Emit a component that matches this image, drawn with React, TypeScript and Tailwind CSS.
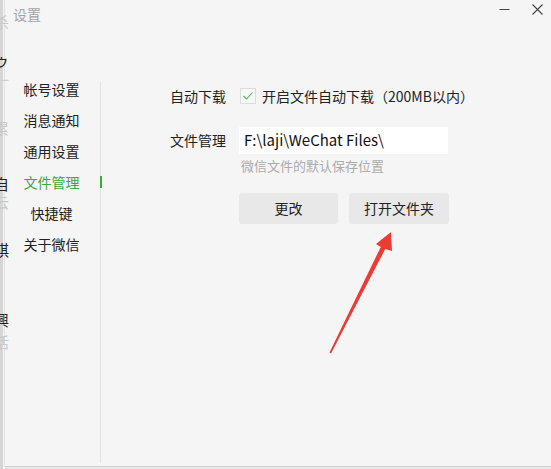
import React from 'react';

const font = { fontFamily: '"Microsoft YaHei", "Noto Sans CJK SC", "Noto Sans", sans-serif' };

const menu = ['帐号设置', '消息通知', '通用设置', '文件管理', '快捷键', '关于微信'];

// fragments of the main window peeking out on the left
const peeks = [
  { ch: '杀', top: 14, cls: 'text-[#c8c8c8]' },
  { ch: 'ゥ', top: 52, cls: 'text-[#222]' },
  { ch: '一', top: 72, cls: 'text-[#d0d0d0]' },
  { ch: '累', top: 120, cls: 'text-[#c8c8c8]' },
  { ch: '自', top: 176, cls: 'text-[#222]' },
  { ch: '云', top: 194, cls: 'text-[#c8c8c8]' },
  { ch: '祺', top: 242, cls: 'text-[#222]' },
  { ch: ')', top: 262, cls: 'text-[#c8c8c8]' },
  { ch: '興', top: 312, cls: 'text-[#222]' },
  { ch: '活', top: 334, cls: 'text-[#c8c8c8]' },
];

function Arrow() {
  return (
    <svg className="absolute left-0 top-0 pointer-events-none" width="551" height="469" viewBox="0 0 551 469">
      <polygon
        points="391,232 392,251 385.2,249.1 331,353.5 329.5,352.5 380.8,246.9 376,244"
        fill="#ea3b35"
      />
    </svg>
  );
}

export default function App() {
  return (
    <div className="relative w-[551px] h-[469px] overflow-hidden bg-[#f5f5f5] text-[#222]" style={font}>
      <div className="flex h-full">
        {/* background window edge */}
        <div className="w-[3px] h-full bg-[#d6d6d6]" />
        <div className="w-px h-[466px] bg-[#e2e2e2] ml-px" />

        <div className="flex-1 flex flex-col">
          {/* title bar */}
          <div className="h-[28px] flex items-start justify-between pl-[8px] pr-[8px]">
            <span className="text-[14px] leading-[28px] text-[#a3a3a3]">设置</span>
            <div className="flex items-center gap-[22px] pt-[4px]">
              <svg width="11" height="11" viewBox="0 0 11 11">
                <line x1="0.5" y1="5.5" x2="10.5" y2="5.5" stroke="#444" strokeWidth="1" />
              </svg>
              <svg width="11" height="11" viewBox="0 0 11 11">
                <path d="M0.5 0.5 L10.5 10.5 M10.5 0.5 L0.5 10.5" stroke="#444" strokeWidth="1.1" />
              </svg>
            </div>
          </div>

          <div className="flex flex-1">
            {/* sidebar */}
            <div className="flex">
              <div className="w-[95px] pt-[46px] pr-[2px] flex flex-col">
                {menu.map((m) => (
                  <div
                    key={m}
                    className={`relative h-[31px] leading-[31px] text-[14px] text-center ${m === '文件管理' ? 'text-[#3aa83a]' : 'text-[#222]'}`}
                  >
                    {m}
                    {m === '文件管理' && <span className="absolute right-[-4px] top-[9px] w-[2px] h-[12px] bg-[#2db52d]" />}
                  </div>
                ))}
              </div>
              <div className="w-px mt-[54px] mb-[3px] bg-[#e2e2e2]" />
            </div>

            {/* content */}
            <div className="flex-1 pl-[69px] pt-[54px] flex flex-col">
              <div className="flex items-center h-[28px]">
                <span className="w-[70px] text-[14px]">自动下载</span>
                <span className="w-[16px] h-[16px] border border-[#dcdcdc] bg-[#f7f7f7] flex items-center justify-center">
                  <svg width="12" height="10" viewBox="0 0 12 10">
                    <path d="M1.5 5 L4.5 8 L10.5 1.5" fill="none" stroke="#4cbb4c" strokeWidth="1.1" />
                  </svg>
                </span>
                <span className="ml-[6px] text-[14px]">开启文件自动下载（200MB以内）</span>
              </div>

              <div className="flex items-center h-[27px] mt-[17px]">
                <span className="w-[69px] text-[14px]">文件管理</span>
                <div className="w-[209px] h-[27px] bg-white flex items-center pl-[5px] text-[15px] text-[#111]">
                  F:\laji\WeChat Files\
                </div>
              </div>
              <div className="pl-[71px] mt-[2px] text-[13px] leading-[20px] text-[#ababab]">微信文件的默认保存位置</div>

              <div className="flex gap-[11px] pl-[69px] mt-[17px]">
                <button className="w-[99px] h-[31px] rounded-[3px] bg-[#e8e8e8] text-[14px] text-[#222]">更改</button>
                <button className="w-[100px] h-[31px] rounded-[3px] bg-[#e8e8e8] text-[14px] text-[#222]">打开文件夹</button>
              </div>
            </div>
          </div>
          <div className="h-[3px] border-t border-[#cfcfcf] bg-[#e6e6e6]" />
        </div>
      </div>

      {/* clipped glyphs from the window behind */}
      <div className="absolute left-0 top-0 w-[11px] h-full overflow-hidden pointer-events-none">
        {peeks.map((p) => (
          <span key={p.top} className={`absolute left-[-6px] text-[15px] leading-[16px] ${p.cls}`} style={{ top: p.top }}>
            {p.ch}
          </span>
        ))}
      </div>

      <Arrow />
    </div>
  );
}
